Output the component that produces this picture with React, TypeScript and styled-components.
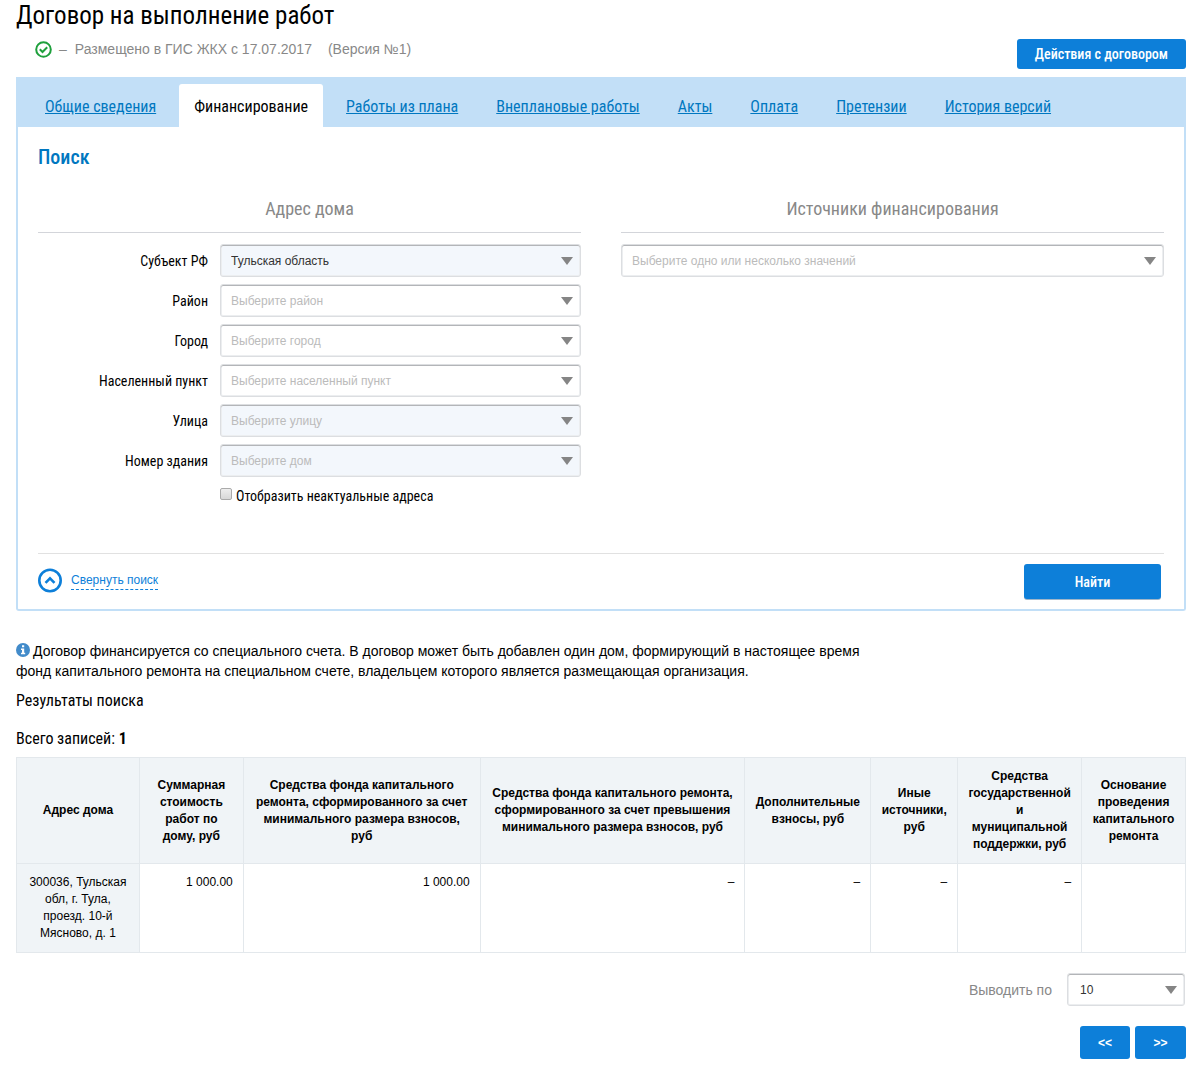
import React from "react";
import styled, { createGlobalStyle } from "styled-components";

const condensed = `"Roboto Condensed", "Liberation Sans Narrow", Roboto, sans-serif`;
const sans = `"Liberation Sans", Arial, sans-serif`;
const blue = "#0d7fd9";
const link = "#0077c0";
const paleBlue = "#c2dff7";

const GlobalStyle = createGlobalStyle`
  *, *::before, *::after { box-sizing: border-box; }
  body {
    margin: 0;
    background: #fff;
    color: #000;
    font-family: ${sans};
    font-size: 14px;
    line-height: 20px;
  }
  button, select, input { font: inherit; }
`;

const Page = styled.main`
  padding: 0 12px 6px 16px;
`;

const PageHeader = styled.header`
  display: flex;
  justify-content: space-between;
  align-items: flex-end;
  padding-bottom: 8px;
`;

const Title = styled.h1`
  margin: 0;
  padding: 1px 0;
  font: 400 25px/30px ${condensed};
`;

const Status = styled.p`
  display: flex;
  align-items: center;
  margin: 0;
  padding: 7px 0 10px 19px;
  color: #888;
`;

const StatusDash = styled.span`
  margin: 0 8px 0 7px;
`;

const StatusVersion = styled.span`
  margin-left: 16px;
`;

const Button = styled.button<{ $width?: number; $height: number }>`
  min-width: ${(p) => (p.$width ? `${p.$width}px` : "0")};
  height: ${(p) => p.$height}px;
  padding: 0 18px;
  border: 0;
  border-radius: 3px;
  background: ${blue};
  color: #fff;
  font: 500 14px/20px ${condensed};
  cursor: pointer;
`;

const SubmitButton = styled(Button)`
  box-shadow: 0 1px 0 #9fb6ca;
`;

const PagerButton = styled(Button)`
  padding: 0;
  font: 700 12px/20px ${sans};
`;

const Panel = styled.section`
  border: 2px solid ${paleBlue};
  border-top: 0;
  border-radius: 0 0 3px 3px;
`;

const Tabs = styled.nav`
  display: flex;
  align-items: flex-end;
  gap: 8px;
  height: 50px;
  padding: 7px 14px 0;
  background: ${paleBlue};
`;

const Tab = styled.a<{ $active?: boolean }>`
  padding: 13px 15px 10px;
  border-radius: 3px 3px 0 0;
  background: ${(p) => (p.$active ? "#fff" : "transparent")};
  color: ${(p) => (p.$active ? "#000" : link)};
  font: 400 16px/20px ${condensed};
  text-decoration: ${(p) => (p.$active ? "none" : "underline")};
  white-space: nowrap;
`;

const SearchForm = styled.form`
  padding: 20px 20px 10px;
`;

const SearchTitle = styled.h2`
  margin: 0 0 30px;
  color: ${link};
  font: 500 20px/20px ${condensed};
`;

const Columns = styled.div`
  display: grid;
  grid-template-columns: 1fr 1fr;
  gap: 40px;
  padding-bottom: 47px;
`;

const Group = styled.fieldset`
  display: flex;
  flex-direction: column;
  gap: 7px;
  min-width: 0;
  margin: 0;
  padding: 0;
  border: 0;
`;

const GroupTitle = styled.legend`
  width: 100%;
  margin-bottom: 11px;
  padding: 0 0 11px;
  border-bottom: 1px solid #d3d5da;
  color: #888;
  font: 400 18px/24px ${condensed};
  text-align: center;
`;

const Field = styled.div`
  display: grid;
  grid-template-columns: 170px 1fr;
  column-gap: 12px;
  align-items: center;
`;

const Label = styled.label`
  font: 400 14px/20px ${condensed};
  text-align: right;
`;

const SelectBox = styled.div<{ $width?: number }>`
  display: grid;
  align-items: center;
  width: ${(p) => (p.$width ? `${p.$width}px` : "auto")};

  &::after {
    content: "";
    grid-area: 1 / 1;
    justify-self: end;
    margin-right: 8px;
    border: 6px solid transparent;
    border-top: 8px solid #858585;
    border-bottom: 0;
    pointer-events: none;
  }
`;

const Select = styled.select<{ $muted?: boolean; $shaded?: boolean; $inset?: number }>`
  grid-area: 1 / 1;
  width: 100%;
  height: 33px;
  padding: 0 24px 0 ${(p) => p.$inset ?? 10}px;
  border: 1px solid #dcdee1;
  border-radius: 3px;
  background: ${(p) => (p.$shaded ? "#f3f7fc" : "#fff")};
  box-shadow: inset 0 1px 0 #b3b5b8, inset 0 0 0 1px #eceef0;
  color: ${(p) => (p.$muted ? "#bbb" : "#333")};
  font: 400 12px/16px ${sans};
  appearance: none;
`;

const CheckRow = styled.label`
  display: flex;
  align-items: center;
  gap: 4px;
  padding: 2px 0 0 182px;
  font: 400 14px/20px ${condensed};
`;

const Checkbox = styled.input`
  width: 12px;
  height: 12px;
  margin: 0 0 4px;
  border: 1px solid #aaa;
  border-radius: 2px;
  background: linear-gradient(#eee, #d8d8d8);
  appearance: none;

  &:checked { background: ${blue}; }
`;

const FormFooter = styled.div`
  display: flex;
  justify-content: space-between;
  align-items: flex-start;
  padding: 10px 3px 0 0;
  border-top: 1px solid #e1e1e1;
`;

const Collapse = styled.button`
  display: flex;
  align-items: center;
  gap: 8px;
  padding: 4px 0 0;
  border: 0;
  background: none;
  color: ${blue};
  font: 400 12px/16px ${sans};
  cursor: pointer;
`;

const CollapseText = styled.span`
  border-bottom: 1px dashed ${blue};
  padding-bottom: 1px;
`;

const Notice = styled.p`
  max-width: 860px;
  margin: 0;
  padding-top: 30px;
`;

const NoticeIcon = styled.svg`
  margin-right: 3px;
  vertical-align: -1px;
`;

const ResultLine = styled.p`
  margin: 0;
  padding: 10px 0 8px;
  font: 400 16px/20px ${condensed};
`;

const Table = styled.table`
  width: 100%;
  border-collapse: collapse;
  table-layout: fixed;
  font: 400 12px/17px ${sans};

  th, td {
    padding: 10px;
    border: 1px solid #e3e8ec;
  }
  th { background: #f0f4f7; }
  td {
    text-align: right;
    vertical-align: top;
  }
  tbody th { font-weight: 400; }
`;

const Col = styled.col<{ $share: number }>`
  width: ${(p) => (p.$share / 1170) * 100}%;
`;

const PageSize = styled.div`
  display: flex;
  justify-content: flex-end;
  align-items: center;
  gap: 15px;
  padding: 20px 1px 20px 0;
  color: #888;
`;

const Pager = styled.nav`
  display: flex;
  justify-content: flex-end;
  gap: 5px;
`;

const tabs = [
  "Общие сведения",
  "Финансирование",
  "Работы из плана",
  "Внеплановые работы",
  "Акты",
  "Оплата",
  "Претензии",
  "История версий",
];

const addressFields = [
  { id: "region", label: "Субъект РФ", value: "Тульская область", muted: false, shaded: true },
  { id: "district", label: "Район", value: "Выберите район", muted: true, shaded: false },
  { id: "city", label: "Город", value: "Выберите город", muted: true, shaded: false },
  { id: "settlement", label: "Населенный пункт", value: "Выберите населенный пункт", muted: true, shaded: false },
  { id: "street", label: "Улица", value: "Выберите улицу", muted: true, shaded: true },
  { id: "house", label: "Номер здания", value: "Выберите дом", muted: true, shaded: true },
];

const columns = [
  { title: "Адрес дома", share: 123 },
  { title: "Суммарная стоимость работ по дому, руб", share: 104 },
  { title: "Средства фонда капитального ремонта, сформированного за счет минимального размера взносов, руб", share: 237 },
  { title: "Средства фонда капитального ремонта, сформированного за счет превышения минимального размера взносов, руб", share: 265 },
  { title: "Дополнительные взносы, руб", share: 126 },
  { title: "Иные источники, руб", share: 87 },
  { title: "Средства государственной и муниципальной поддержки, руб", share: 124 },
  { title: "Основание проведения капитального ремонта", share: 104 },
];

const amounts = ["1 000.00", "1 000.00", "–", "–", "–", "–", ""];

export default function App() {
  return (
    <>
      <GlobalStyle />
      <Page>
        <PageHeader>
          <div>
            <Title>Договор на выполнение работ</Title>
            <Status>
              <svg width="17" height="17" viewBox="0 0 17 17" fill="none" stroke="#1ea03c" strokeWidth="2" aria-hidden="true">
                <circle cx="8.5" cy="8.5" r="7.3" />
                <path d="M4.800 8.300l2.700 2.700 4.700-4.700" />
              </svg>
              <StatusDash>–</StatusDash>
              <span>Размещено в ГИС ЖКХ с 17.07.2017</span>
              <StatusVersion>(Версия №1)</StatusVersion>
            </Status>
          </div>
          <Button type="button" $height={30}>Действия с договором</Button>
        </PageHeader>

        <Tabs>
          {tabs.map((name, i) => (
            <Tab key={name} href="#" $active={i === 1} aria-current={i === 1 ? "page" : undefined}>
              {name}
            </Tab>
          ))}
        </Tabs>
        <Panel>
          <SearchForm onSubmit={(e) => e.preventDefault()}>
            <SearchTitle>Поиск</SearchTitle>
            <Columns>
              <Group>
                <GroupTitle>Адрес дома</GroupTitle>
                {addressFields.map((f) => (
                  <Field key={f.id}>
                    <Label htmlFor={f.id}>{f.label}</Label>
                    <SelectBox>
                      <Select id={f.id} $muted={f.muted} $shaded={f.shaded}>
                        <option>{f.value}</option>
                      </Select>
                    </SelectBox>
                  </Field>
                ))}
                <CheckRow>
                  <Checkbox type="checkbox" />
                  Отобразить неактуальные адреса
                </CheckRow>
              </Group>
              <Group>
                <GroupTitle>Источники финансирования</GroupTitle>
                <SelectBox>
                  <Select $muted aria-label="Источники финансирования">
                    <option>Выберите одно или несколько значений</option>
                  </Select>
                </SelectBox>
              </Group>
            </Columns>
            <FormFooter>
              <Collapse type="button">
                <svg width="25" height="25" viewBox="0 0 25 25" fill="none" stroke={blue} strokeWidth="2.6" aria-hidden="true">
                  <circle cx="12" cy="12.500" r="10.700" />
                  <path d="M7.500 14.800l4.500-4.500 4.500 4.500" />
                </svg>
                <CollapseText>Свернуть поиск</CollapseText>
              </Collapse>
              <SubmitButton type="submit" $height={35} $width={137}>Найти</SubmitButton>
            </FormFooter>
          </SearchForm>
        </Panel>

        <Notice>
          <NoticeIcon width="14" height="14" viewBox="0 0 14 14" aria-hidden="true">
            <circle cx="7" cy="7" r="7" fill="#428bca" />
            <path d="M6 2.3h2.2v2H6zM5 5.5h3.2v4.3h1v1.5H5V9.800h1V7H5z" fill="#fff" />
          </NoticeIcon>
          Договор финансируется со специального счета. В договор может быть добавлен один дом, формирующий в настоящее
          время фонд капитального ремонта на специальном счете, владельцем которого является размещающая организация.
        </Notice>
        <ResultLine>Результаты поиска</ResultLine>
        <ResultLine>
          Всего записей: <b>1</b>
        </ResultLine>

        <Table>
          <colgroup>
            {columns.map((c) => (
              <Col key={c.title} $share={c.share} />
            ))}
          </colgroup>
          <thead>
            <tr>
              {columns.map((c) => (
                <th key={c.title} scope="col">{c.title}</th>
              ))}
            </tr>
          </thead>
          <tbody>
            <tr>
              <th scope="row">300036, Тульская обл, г. Тула, проезд. 10-й Мясново, д. 1</th>
              {amounts.map((a, i) => (
                <td key={i}>{a}</td>
              ))}
            </tr>
          </tbody>
        </Table>

        <PageSize>
          <label htmlFor="page-size">Выводить по</label>
          <SelectBox $width={118}>
            <Select id="page-size" $inset={12}>
              <option>10</option>
            </Select>
          </SelectBox>
        </PageSize>
        <Pager aria-label="Страницы">
          <PagerButton type="button" $height={33} $width={50}>&lt;&lt;</PagerButton>
          <PagerButton type="button" $height={33} $width={51}>&gt;&gt;</PagerButton>
        </Pager>
      </Page>
    </>
  );
}
